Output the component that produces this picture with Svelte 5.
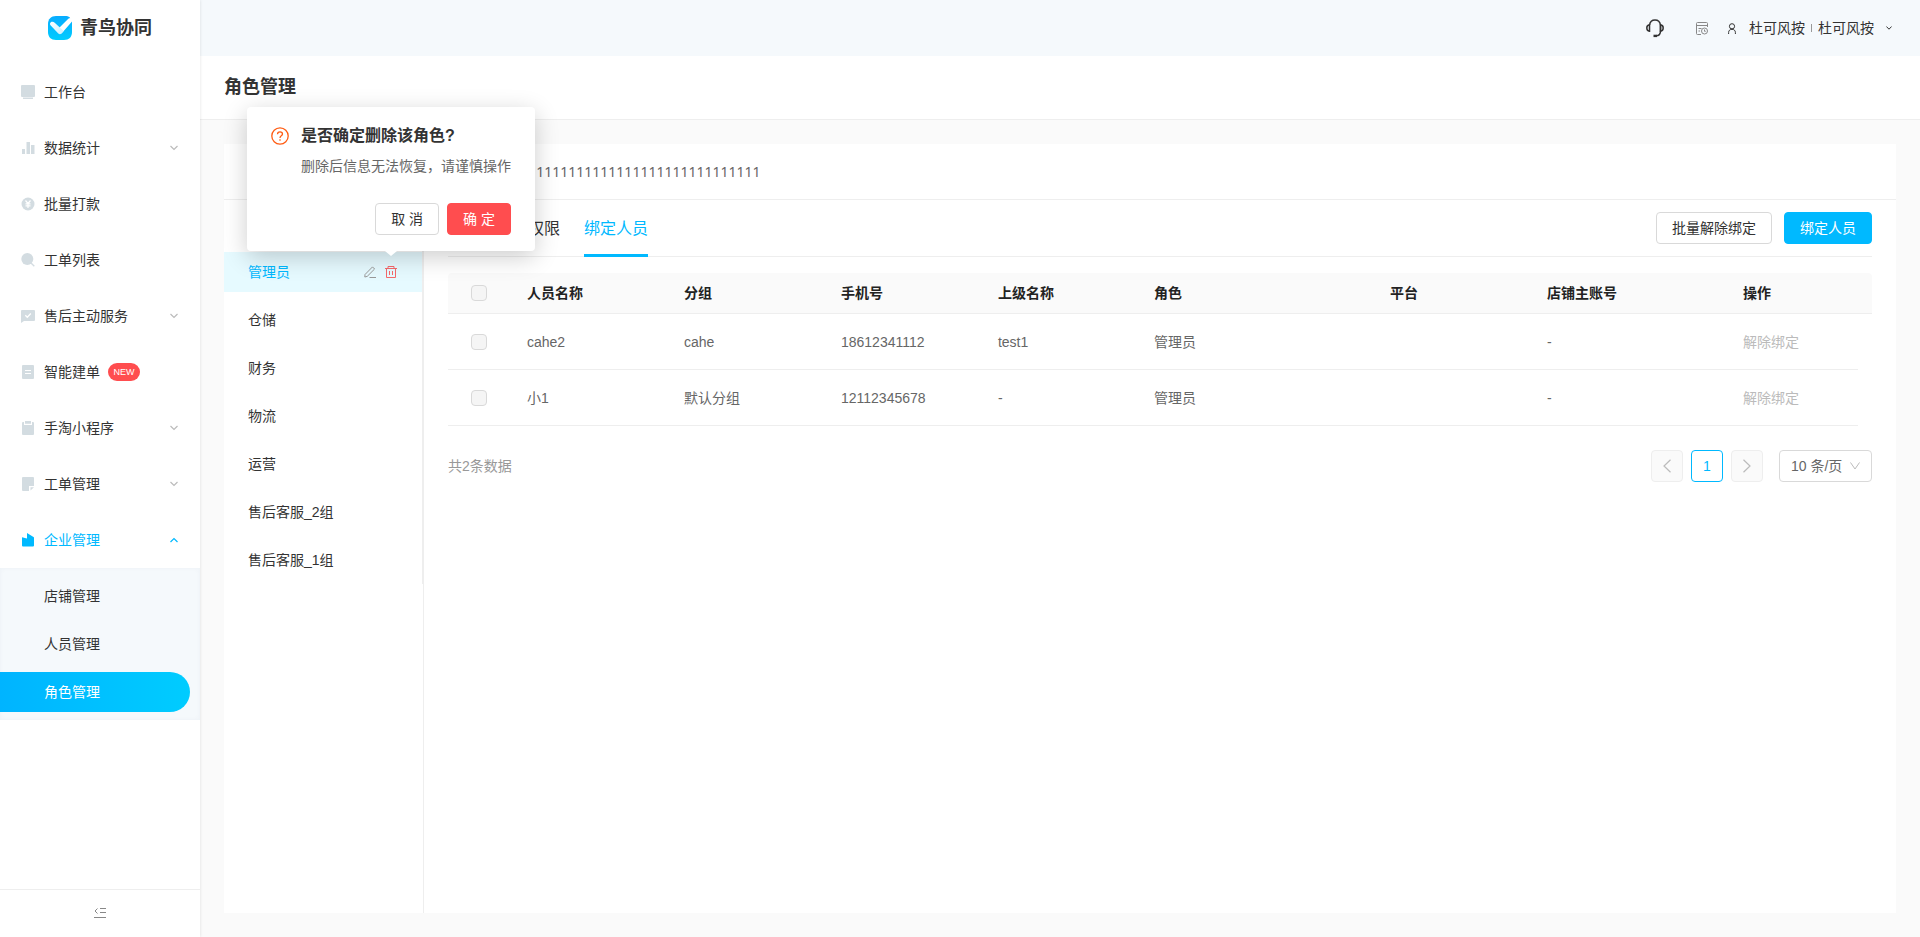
<script>
  let confirmOpen = true
  let activeRole = '管理员'
  let activeTab = '绑定人员'
  let pageSize = '10'

  const menus = [
    { name: '工作台', icon: 'desk' },
    { name: '数据统计', icon: 'chart', children: true },
    { name: '批量打款', icon: 'pay' },
    { name: '工单列表', icon: 'search' },
    { name: '售后主动服务', icon: 'service', children: true },
    { name: '智能建单', icon: 'order', isNew: true },
    { name: '手淘小程序', icon: 'clip', children: true },
    { name: '工单管理', icon: 'note', children: true },
    { name: '企业管理', icon: 'company', children: true, open: true },
  ]
  const subMenus = ['店铺管理', '人员管理', '角色管理']

  const roles = [
    '管理员',
    '仓储',
    '财务',
    '物流',
    '运营',
    '售后客服_2组',
    '售后客服_1组',
  ]
  const roleDesc = '1'.repeat(64)
  const tabs = ['设置角色的权限', '绑定人员']

  const columns = [
    { title: '人员名称', key: 'name', width: 157 },
    { title: '分组', key: 'group', width: 157 },
    { title: '手机号', key: 'phone', width: 157 },
    { title: '上级名称', key: 'parent', width: 156 },
    { title: '角色', key: 'role', width: 236 },
    { title: '平台', key: 'platform', width: 157 },
    { title: '店铺主账号', key: 'account', width: 196 },
  ]
  const checkWidth = 63
  const actionWidth = 131
  const gutterWidth = 14
  const total =
    columns.reduce((sum, c) => sum + c.width, 0) +
    checkWidth +
    actionWidth +
    gutterWidth

  const rows = [
    {
      name: 'cahe2',
      group: 'cahe',
      phone: '18612341112',
      parent: 'test1',
      role: '管理员',
      platform: '',
      account: '-',
    },
    {
      name: '小1',
      group: '默认分组',
      phone: '12112345678',
      parent: '-',
      role: '管理员',
      platform: '',
      account: '-',
    },
  ]

  function percent(width) {
    return (width / total) * 100 + '%'
  }
</script>

<div class="layout">
  <aside class="sidebar">
    <div class="logo">
      <svg width="24" height="24" viewBox="0 0 24 24" aria-hidden="true">
        <defs>
          <linearGradient id="logoBg" x1="0" y1="0" x2="0" y2="1">
            <stop offset="0" stop-color="#08acff" />
            <stop offset="1" stop-color="#00ccff" />
          </linearGradient>
          <linearGradient id="logoWing" x1="0" y1="0" x2="1" y2="1">
            <stop offset="0" stop-color="#fff" />
            <stop offset="1" stop-color="#c9efff" />
          </linearGradient>
        </defs>
        <path
          fill="url(#logoBg)"
          d="M8 0h9c2 0 3.500.400 4.600 1.200L24 5v11c0 5-3 8-8 8H8c-5 0-8-3-8-8V8c0-5 3-8 8-8z"
        />
        <path fill="#fff" d="M24 2.500v3L13.500 17.500 9.500 13.500 20.300 2.800c1-1 2.700-1.200 3.700-.300z" />
        <path
          fill="url(#logoWing)"
          d="M2.800 6.300c1.200-.900 2.900-.500 3.900.500l9 8.200-2.200 2.600c-1 1-2.200 1-3.200 0L2.500 9.300c-.800-1-.600-2.200.300-3z"
        />
      </svg>
      <span>青鸟协同</span>
    </div>

    <nav>
      {#each menus as menu}
        <a href="#{menu.icon}" class="menu-item" class:open={menu.open}>
          <svg class="menu-icon" width="14" height="14" viewBox="0 0 14 14" fill="currentColor" aria-hidden="true">
            {#if menu.icon === 'desk'}
              <path d="M1 0h12a1 1 0 0 1 1 1v10a1 1 0 0 1-1 1H1a1 1 0 0 1-1-1V1a1 1 0 0 1 1-1zM2 12.600h10V14H2z" />
            {:else if menu.icon === 'chart'}
              <path d="M1 8h3v5H1zM5.500 1h3.500v12H5.500zM10 4h3.500v9H10z" />
            {:else if menu.icon === 'pay'}
              <circle cx="7" cy="7" r="6.500" />
              <path d="M4.500 3.500L7 6.500l2.500-3M7 6.500V11M4.500 6.800h5M4.500 8.800h5" fill="none" stroke="#fff" stroke-width="1.200" />
            {:else if menu.icon === 'search'}
              <circle cx="6.300" cy="6" r="6" />
              <path d="M10 10l3.300 3.200" stroke="currentColor" stroke-width="1.400" />
            {:else if menu.icon === 'service'}
              <path d="M1 1h12a1 1 0 0 1 1 1v9a1 1 0 0 1-1 1H3l-3 2V2a1 1 0 0 1 1-1z" />
              <path d="M4.300 6.200l2 2 3.500-3.700" fill="none" stroke="#fff" stroke-width="1.300" />
            {:else if menu.icon === 'order'}
              <path d="M2 0h10a1 1 0 0 1 1 1v12a1 1 0 0 1-1 1H2a1 1 0 0 1-1-1V1a1 1 0 0 1 1-1z" />
              <path d="M4 5.500h6M4 8.500h6" stroke="#fff" stroke-width="1.200" />
            {:else if menu.icon === 'clip'}
              <path d="M2 1h1v3h8V1h1a1 1 0 0 1 1 1v11a1 1 0 0 1-1 1H2a1 1 0 0 1-1-1V2a1 1 0 0 1 1-1zM4 0h6v2.800H4z" />
            {:else if menu.icon === 'note'}
              <path d="M2 0h10a1 1 0 0 1 1 1v8H8v5H2a1 1 0 0 1-1-1V1a1 1 0 0 1 1-1zM9.500 10.200H13L9.500 13.600z" />
            {:else}
              <path d="M1 4.200l5 1.300V0l6.500 4a1 1 0 0 1 .500.900V12.500a1 1 0 0 1-1 1H2a1 1 0 0 1-1-1z" />
            {/if}
          </svg>
          <span>{menu.name}</span>
          {#if menu.isNew}
            <em class="badge">NEW</em>
          {/if}
          {#if menu.children}
            <svg class="arrow" width="8" height="6" viewBox="0 0 8 6" aria-hidden="true">
              <path
                d={menu.open ? 'M.500 5L4 1.500 7.500 5' : 'M.500 1L4 4.500 7.500 1'}
                fill="none"
                stroke="currentColor"
                stroke-width="1.200"
              />
            </svg>
          {/if}
        </a>
      {/each}
      <div class="sub-menu">
        {#each subMenus as sub}
          <a href="#{sub}" class:active={sub === '角色管理'}>{sub}</a>
        {/each}
      </div>
    </nav>

    <button class="collapse" aria-label="收起菜单">
      <svg width="12" height="11" viewBox="0 0 12 11" fill="none" stroke="currentColor" aria-hidden="true">
        <path d="M6 .500h6M6 4.500h6M0 9.500h12M3.500 .500L1 3l2.500 2.500" />
      </svg>
    </button>
  </aside>

  <div class="main">
    <header class="topbar">
      <button class="icon-btn headset" aria-label="客服">
        <svg width="18" height="19" viewBox="0 0 18 19" fill="none" stroke="currentColor" stroke-width="1.500" aria-hidden="true">
          <path d="M3.500 6C4 2.800 6 1 9 1s5 1.800 5.500 5v6c0 3-1.500 4.800-4.500 4.800" />
          <path d="M3.500 5.800v6.400C1.800 12 .800 10.800.800 9s1-3 2.700-3.200zM14.500 5.800v6.400c1.700-.200 2.700-1.400 2.700-3.200s-1-3-2.700-3.200z" />
          <path d="M7.500 16.900h3.500" stroke-width="2.400" />
        </svg>
      </button>
      <button class="icon-btn record" aria-label="记录">
        <svg width="12" height="13" viewBox="0 0 12 13" fill="none" stroke="currentColor" aria-hidden="true">
          <path d="M5 12.500H1.500a1 1 0 0 1-1-1v-10a1 1 0 0 1 1-1h9a1 1 0 0 1 1 1V5M.500 3.500h11M2.500 6.500h3M2.500 9h1.500" />
          <circle cx="8.500" cy="9" r="3" />
          <path d="M8.500 7.500v1.800h1.200" />
        </svg>
      </button>
      <button class="user">
        <svg width="8" height="11" viewBox="0 0 8 11" fill="none" stroke="currentColor" aria-hidden="true">
          <circle cx="4" cy="3.300" r="2.600" />
          <path d="M.600 11V9.500C.600 7.500 2 6.300 4 6.300s3.400 1.200 3.400 3.200V11" />
        </svg>
        <span>杜可风按</span>
        <i></i>
        <span>杜可风按</span>
        <svg class="down" width="6" height="4" viewBox="0 0 6 4" fill="none" stroke="currentColor" aria-hidden="true">
          <path d="M.400 .500L3 3.200 5.600 .500" />
        </svg>
      </button>
    </header>

    <h1>角色管理</h1>

    <main>
      <section class="card">
        <p class="role-desc">{roleDesc}</p>

        <div class="card-body">
          <div class="role-side">
            <ul class="role-list">
              {#each roles as role}
                <li class:active={role === activeRole}>
                  <button class="role-name" on:click={() => (activeRole = role)}>{role}</button>
                  {#if role === activeRole}
                    <button class="role-btn" aria-label="编辑">
                      <svg width="12" height="12" viewBox="0 0 12 12" fill="none" stroke="currentColor" aria-hidden="true">
                        <path d="M1 8.500L8.500 .900 10.600 3 3.200 10.400.800 11zM5.500 11.500H12" />
                      </svg>
                    </button>
                    <div class="delete-wrap">
                      <button class="role-btn delete" aria-label="删除" on:click={() => (confirmOpen = true)}>
                        <svg width="12" height="12" viewBox="0 0 12 12" fill="none" stroke="currentColor" aria-hidden="true">
                          <path d="M0 2.500h12M3 2.500v-2h6v2M1.500 2.500v9h9v-9M4.500 5v4M7.500 5v4" />
                        </svg>
                      </button>
                      {#if confirmOpen}
                        <div class="popconfirm" role="dialog" aria-label="删除角色">
                          <div class="pop-message">
                            <svg width="18" height="18" viewBox="0 0 18 18" fill="none" stroke="currentColor" stroke-width="1.300" aria-hidden="true">
                              <circle cx="9" cy="9" r="8.200" />
                              <path d="M6.500 7.200c0-1.400 1-2.400 2.500-2.400s2.500 1 2.500 2.200c0 1.700-2.500 1.900-2.500 3.900" />
                              <path d="M9 12.200v1.500" />
                            </svg>
                            <div>
                              <strong>是否确定删除该角色?</strong>
                              <p>删除后信息无法恢复，请谨慎操作</p>
                            </div>
                          </div>
                          <div class="pop-buttons">
                            <button class="btn" on:click={() => (confirmOpen = false)}>取 消</button>
                            <button class="btn danger" on:click={() => (confirmOpen = false)}>确 定</button>
                          </div>
                        </div>
                      {/if}
                    </div>
                  {/if}
                </li>
              {/each}
            </ul>
          </div>

          <div class="content">
            <div class="tab-bar">
              {#each tabs as tab}
                <button class="tab" class:active={tab === activeTab} on:click={() => (activeTab = tab)}>
                  {tab}
                </button>
              {/each}
              <div class="tab-extra">
                <button class="btn">批量解除绑定</button>
                <button class="btn primary">绑定人员</button>
              </div>
            </div>

            <table>
              <colgroup>
                <col style="width: {percent(checkWidth)}" />
                {#each columns as col}
                  <col style="width: {percent(col.width)}" />
                {/each}
                <col style="width: {percent(actionWidth)}" />
                <col style="width: {percent(gutterWidth)}" />
              </colgroup>
              <thead>
                <tr>
                  <th class="check"><input type="checkbox" aria-label="全选" disabled /></th>
                  {#each columns as col}
                    <th>{col.title}</th>
                  {/each}
                  <th>操作</th>
                  <th class="gutter"></th>
                </tr>
              </thead>
              <tbody>
                {#each rows as row}
                  <tr>
                    <td class="check"><input type="checkbox" aria-label="选择{row.name}" disabled /></td>
                    {#each columns as col}
                      <td>{row[col.key]}</td>
                    {/each}
                    <td><button class="link" disabled>解除绑定</button></td>
                    <td class="gutter"></td>
                  </tr>
                {/each}
              </tbody>
            </table>

            <div class="pagination">
              <span class="count">共{rows.length}条数据</span>
              <button class="page" aria-label="上一页" disabled>
                <svg width="8" height="14" viewBox="0 0 8 14" fill="none" stroke="currentColor" stroke-width="1.200" aria-hidden="true">
                  <path d="M7.500 .800L1 7l6.500 6.200" />
                </svg>
              </button>
              <button class="page current">1</button>
              <button class="page" aria-label="下一页" disabled>
                <svg width="8" height="14" viewBox="0 0 8 14" fill="none" stroke="currentColor" stroke-width="1.200" aria-hidden="true">
                  <path d="M.500 .800L7 7 .500 13.200" />
                </svg>
              </button>
              <div class="size">
                <select aria-label="每页条数" bind:value={pageSize}>
                  <option value="10">10 条/页</option>
                  <option value="20">20 条/页</option>
                  <option value="50">50 条/页</option>
                </select>
                <svg width="10" height="8" viewBox="0 0 10 8" fill="none" stroke="currentColor" aria-hidden="true">
                  <path d="M.500 .500L5 7 9.500 .500" />
                </svg>
              </div>
            </div>
          </div>
        </div>
      </section>
    </main>
  </div>
</div>

<style>
  :global(body) {
    margin: 0;
    color: #333;
    background: #fafafa;
    font-family: 'Liberation Sans', 'Noto Sans CJK SC', sans-serif;
    font-size: 14px;
    line-height: 22px;
  }

  * {
    box-sizing: border-box;
  }

  button,
  select {
    padding: 0;
    border: 0;
    background: none;
    color: inherit;
    font: inherit;
    cursor: pointer;
  }

  a {
    color: inherit;
    text-decoration: none;
  }

  svg {
    display: block;
    flex: none;
  }

  .layout {
    display: flex;
    min-height: 100vh;
  }

  /* sidebar */
  .sidebar {
    position: relative;
    z-index: 1;
    display: flex;
    flex-direction: column;
    flex: none;
    width: 200px;
    background: #fff;
    box-shadow: 0 0 3px rgba(0, 0, 0, 0.12);
  }

  .logo {
    display: flex;
    align-items: center;
    gap: 8px;
    height: 56px;
    margin-bottom: 8px;
    padding-left: 48px;
    font-size: 18px;
    font-weight: bold;
  }

  nav {
    flex: 1;
  }

  .menu-item {
    display: flex;
    align-items: center;
    height: 56px;
    padding: 0 22px 0 21px;
  }

  .menu-icon {
    margin-right: 9px;
    color: #d3dce1;
  }

  .menu-item.open,
  .menu-item.open .menu-icon,
  .menu-item.open .arrow {
    color: #00b9ff;
  }

  .arrow {
    margin-left: auto;
    color: #bbb;
  }

  .badge {
    margin-left: 8px;
    width: 32px;
    border-radius: 9px;
    background: #ff4d4f;
    color: #fff;
    font-size: 9px;
    font-style: normal;
    line-height: 18px;
    text-align: center;
  }

  .sub-menu {
    display: flex;
    flex-direction: column;
    gap: 8px;
    padding: 8px 10px 8px 0;
    background: #f5f9fc;
    box-shadow: inset 0 0 5px rgba(0, 60, 100, 0.04);
  }

  .sub-menu a {
    padding-left: 44px;
    border-radius: 0 20px 20px 0;
    line-height: 40px;
  }

  .sub-menu a.active {
    background: linear-gradient(90deg, #00b4ff, #00ccff);
    color: #fff;
  }

  .collapse {
    display: flex;
    align-items: center;
    justify-content: center;
    height: 48px;
    border-top: 1px solid #eee;
    color: #888;
  }

  /* top bar */
  .main {
    display: flex;
    flex-direction: column;
    flex: 1;
    min-width: 0;
  }

  .topbar {
    display: flex;
    align-items: center;
    justify-content: flex-end;
    height: 56px;
    padding-right: 28px;
    background: #f5f9fc;
  }

  .headset {
    margin-right: 32px;
  }

  .record {
    margin-right: 20px;
    color: #888;
  }

  .user {
    display: flex;
    align-items: center;
  }

  .user span {
    margin-left: 13px;
  }

  .user i {
    width: 1px;
    height: 8px;
    margin: 0 -7px 0 6px;
    background: #999;
  }

  .user .down {
    margin-left: 12px;
  }

  h1 {
    margin: 0;
    padding: 0 24px;
    border-bottom: 1px solid #eee;
    background: #fff;
    font-size: 18px;
    line-height: 63px;
  }

  main {
    display: flex;
    flex: 1;
    padding: 24px;
  }

  .card {
    display: flex;
    flex-direction: column;
    flex: 1;
    min-width: 0;
    background: #fff;
  }

  .role-desc {
    margin: 0;
    padding: 0 24px;
    border-bottom: 1px solid #eee;
    color: #666;
    font-family: 'Noto Sans', 'Noto Sans CJK SC', sans-serif;
    line-height: 55px;
  }

  .card-body {
    display: flex;
    flex: 1;
  }

  /* role list */
  .role-side {
    flex: none;
    width: 200px;
    padding-top: 48px;
    border-right: 1px solid #eee;
  }

  .role-list {
    margin: 0;
    padding: 0;
    border-right: 1px solid #eee;
    list-style: none;
  }

  .role-list li {
    display: flex;
    align-items: center;
    height: 40px;
    padding: 0 24px;
    border: solid #fff;
    border-width: 4px 0;
    box-sizing: content-box;
  }

  .role-list li.active {
    background: #e6faff;
  }

  .role-name {
    flex: 1;
    text-align: left;
    line-height: 40px;
  }

  .active .role-name {
    color: #00b9ff;
  }

  .role-btn {
    display: block;
    color: #999;
  }

  .delete {
    color: #f5696b;
  }

  .delete-wrap {
    position: relative;
    margin-left: 9px;
    margin-right: 1px;
  }

  .popconfirm {
    position: absolute;
    bottom: calc(100% + 15px);
    left: 50%;
    z-index: 2;
    width: 288px;
    padding: 18px 24px 16px;
    border-radius: 4px;
    background: #fff;
    box-shadow: 0 6px 24px rgba(0, 0, 0, 0.2);
    transform: translateX(-50%);
  }

  .popconfirm::after {
    content: '';
    position: absolute;
    top: 100%;
    left: 50%;
    border: solid transparent;
    border-width: 5px 6px 0;
    border-top-color: #fff;
    transform: translateX(-50%);
  }

  .pop-message {
    display: flex;
    gap: 12px;
    white-space: nowrap;
  }

  .pop-message svg {
    margin-top: 2px;
    color: #ff5d14;
  }

  .pop-message strong {
    font-size: 16px;
  }

  .pop-message p {
    margin: 8px 0 0;
    color: #666;
  }

  .pop-buttons {
    display: flex;
    justify-content: flex-end;
    gap: 8px;
    margin-top: 26px;
  }

  .btn {
    height: 32px;
    padding: 0 15px;
    border: 1px solid #d9d9d9;
    border-radius: 4px;
    background: #fff;
  }

  .btn.primary {
    border-color: #00b9ff;
    background: #00b9ff;
    color: #fff;
  }

  .btn.danger {
    border-color: #ff4d4f;
    background: #ff4d4f;
    color: #fff;
  }

  /* right side */
  .content {
    flex: 1;
    min-width: 0;
    padding: 0 24px;
  }

  .tab-bar {
    display: flex;
    gap: 24px;
    height: 57px;
    margin-bottom: 16px;
    border-bottom: 1px solid #eee;
  }

  .tab {
    height: 57px;
    padding-top: 3px;
    border-bottom: 3px solid transparent;
    font-size: 16px;
  }

  .tab.active {
    border-color: #00b9ff;
    color: #00b9ff;
  }

  .tab-extra {
    display: flex;
    align-items: center;
    gap: 12px;
    margin-left: auto;
  }

  table {
    width: 100%;
    border-collapse: separate;
    border-spacing: 0;
    table-layout: fixed;
  }

  th,
  td {
    padding: 0 16px;
    border-bottom: 1px solid #eee;
    text-align: left;
  }

  th {
    height: 41px;
    background: #fafafa;
    color: #222;
  }

  th:first-child {
    border-top-left-radius: 4px;
  }

  th:last-child {
    border-top-right-radius: 4px;
  }

  td {
    height: 56px;
    color: #666;
  }

  .check {
    padding: 0;
    text-align: center;
  }

  .gutter {
    padding: 0;
  }

  td.gutter {
    border-bottom: 0;
  }

  input[type='checkbox'] {
    display: block;
    width: 16px;
    height: 16px;
    margin: 0 auto;
    border: 1px solid #d9d9d9;
    border-radius: 4px;
    background: #f5f5f5;
    appearance: none;
  }

  .link {
    color: #bbb;
  }

  .pagination {
    display: flex;
    align-items: center;
    gap: 8px;
    margin-top: 24px;
  }

  .count {
    margin-right: auto;
    color: #999;
  }

  .page {
    display: flex;
    align-items: center;
    justify-content: center;
    width: 32px;
    height: 32px;
    border: 1px solid #eee;
    border-radius: 4px;
    background: #fafafa;
    color: #bbb;
  }

  .page.current {
    border-color: #00b9ff;
    background: #fff;
    color: #00b9ff;
  }

  .size {
    position: relative;
    margin-left: 8px;
  }

  .size select {
    display: block;
    width: 93px;
    height: 32px;
    padding: 0 11px;
    border: 1px solid #d9d9d9;
    border-radius: 4px;
    background: #fff;
    color: #666;
    appearance: none;
  }

  .size svg {
    position: absolute;
    top: 12px;
    right: 12px;
    color: #bbb;
    pointer-events: none;
  }
</style>
